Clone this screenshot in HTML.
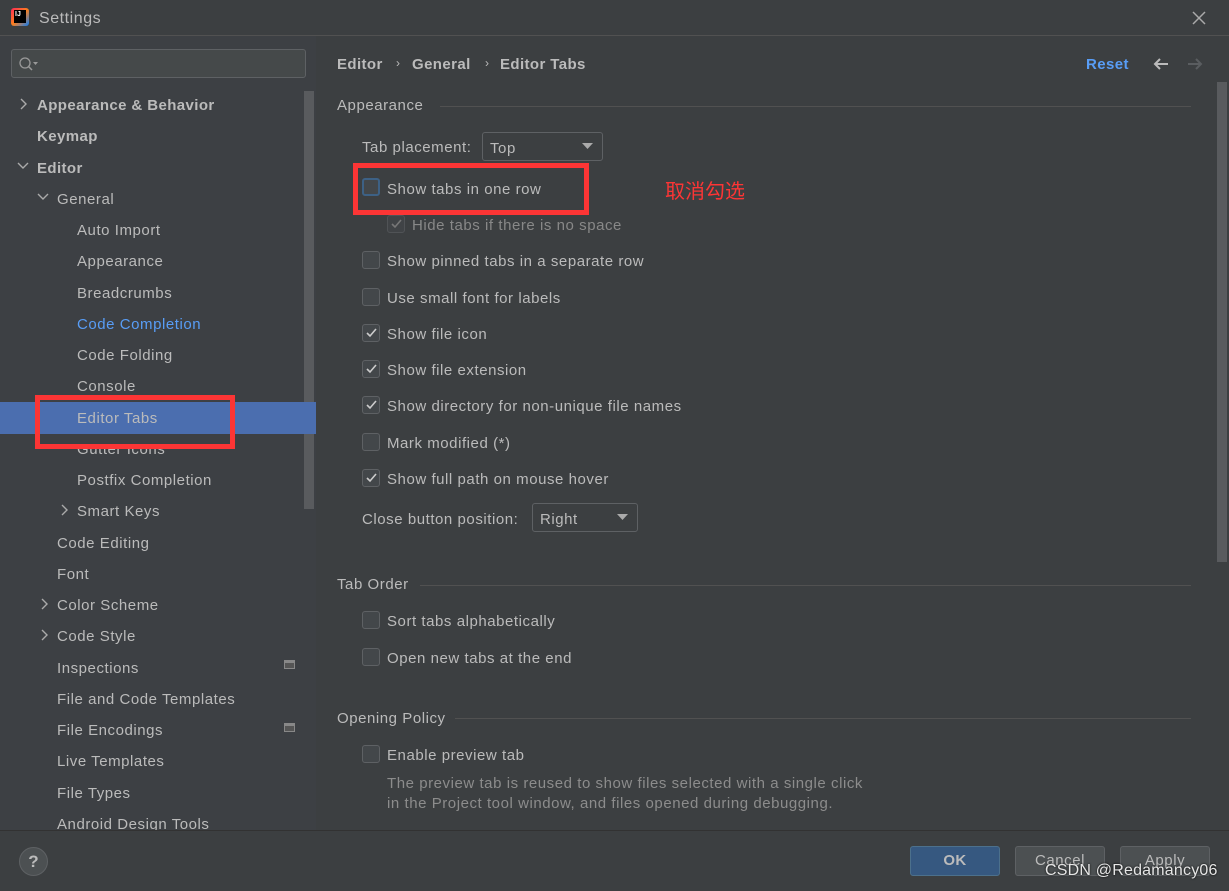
<!DOCTYPE html>
<html><head><meta charset="utf-8"><style>
*{margin:0;padding:0;box-sizing:border-box}
body{width:1229px;height:891px;background:#3c3f41;font-family:"Liberation Sans","Noto Sans CJK SC",sans-serif;font-size:15px;letter-spacing:0.55px;color:#bbbbbb;position:relative;overflow:hidden}
.a{position:absolute;white-space:nowrap}
.side{position:absolute;left:0;top:36px;width:316px;height:795px;background:#3d4044}
.row{position:absolute;height:31px;line-height:33px}
.b{font-weight:bold;letter-spacing:0.4px}
.cb{position:absolute;width:18px;height:18px;border:1px solid #5e6164;border-radius:3px;background:#43474a}
.chk{position:absolute;left:362px}
.lbl{position:absolute;left:387px;line-height:20px;margin-top:1px}
.chev{position:absolute;font-size:13px;color:#aaa}
.btn{position:absolute;top:846px;width:90px;height:30px;border:1px solid #5e6164;border-radius:3px;background:#4c5052;text-align:center;line-height:28px;color:#bbb}
.sep{position:absolute;height:1px;background:#515151}
</style></head><body>
<div class="a" style="left:0;top:0;width:1229px;height:36px;background:#3c3f41;border-bottom:1px solid #515151"></div>
<div class="a" style="left:11px;top:8px;width:18px;height:18px;background:linear-gradient(135deg,#fe2857,#fc801d 50%,#087cfa);border-radius:3px"></div>
<div class="a" style="left:14px;top:10px;width:12px;height:13px;background:#000;color:#fff;font-size:7px;font-weight:bold;line-height:9px;padding-left:1px;letter-spacing:0">IJ</div>
<div class="a" style="left:39px;top:10px;font-size:16px;color:#bbb">Settings</div>
<svg class="a" style="left:1191px;top:10px" width="16" height="16"><path d="M2 2L14 14M14 2L2 14" stroke="#aaa" stroke-width="1.5"/></svg>

<div class="side"></div>
<div class="a" style="left:11px;top:49px;width:295px;height:29px;border:1px solid #5e6164;border-radius:3px;background:#45494a"></div>
<svg class="a" style="left:18px;top:56px" width="22" height="16"><circle cx="7" cy="7" r="5" fill="none" stroke="#999" stroke-width="1.3"/><path d="M10.5 10.5L14 14" stroke="#999" stroke-width="1.5"/><path d="M15 6h5l-2.5 3z" fill="#999"/></svg>
<div class="a" style="left:304px;top:91px;width:10px;height:418px;background:#595b5e"></div>
<div class="a" style="left:0;top:402px;width:316px;height:32px;background:#4b6eaf"></div>

<svg class="a" style="left:19px;top:98px" width="10" height="12"><path d="M2 1l5 5-5 5" stroke="#aaa" fill="none" stroke-width="1.4"/></svg>
<div class="row b" style="left:37px;top:89px">Appearance &amp; Behavior</div>
<div class="row b" style="left:37px;top:120px">Keymap</div>
<svg class="a" style="left:17px;top:161px" width="12" height="10"><path d="M1 2l5 5 5-5" stroke="#aaa" fill="none" stroke-width="1.4"/></svg>
<div class="row b" style="left:37px;top:152px">Editor</div>
<svg class="a" style="left:37px;top:192px" width="12" height="10"><path d="M1 2l5 5 5-5" stroke="#aaa" fill="none" stroke-width="1.4"/></svg>
<div class="row" style="left:57px;top:183px">General</div>
<div class="row" style="left:77px;top:214px">Auto Import</div>
<div class="row" style="left:77px;top:245px">Appearance</div>
<div class="row" style="left:77px;top:277px">Breadcrumbs</div>
<div class="row" style="left:77px;top:308px;color:#589df6">Code Completion</div>
<div class="row" style="left:77px;top:339px">Code Folding</div>
<div class="row" style="left:77px;top:370px">Console</div>
<div class="row" style="left:77px;top:402px">Editor Tabs</div>
<div class="row" style="left:77px;top:433px">Gutter Icons</div>
<div class="row" style="left:77px;top:464px">Postfix Completion</div>
<svg class="a" style="left:60px;top:504px" width="10" height="12"><path d="M2 1l5 5-5 5" stroke="#aaa" fill="none" stroke-width="1.4"/></svg>
<div class="row" style="left:77px;top:495px">Smart Keys</div>
<div class="row" style="left:57px;top:527px">Code Editing</div>
<div class="row" style="left:57px;top:558px">Font</div>
<svg class="a" style="left:40px;top:598px" width="10" height="12"><path d="M2 1l5 5-5 5" stroke="#aaa" fill="none" stroke-width="1.4"/></svg>
<div class="row" style="left:57px;top:589px">Color Scheme</div>
<svg class="a" style="left:40px;top:629px" width="10" height="12"><path d="M2 1l5 5-5 5" stroke="#aaa" fill="none" stroke-width="1.4"/></svg>
<div class="row" style="left:57px;top:620px">Code Style</div>
<div class="row" style="left:57px;top:652px">Inspections</div>
<div class="a" style="left:284px;top:660px;width:11px;height:9px;border:1px solid #888;border-top-width:3px;background:#555"></div>
<div class="row" style="left:57px;top:683px">File and Code Templates</div>
<div class="row" style="left:57px;top:714px">File Encodings</div>
<div class="a" style="left:284px;top:723px;width:11px;height:9px;border:1px solid #888;border-top-width:3px;background:#555"></div>
<div class="row" style="left:57px;top:745px">Live Templates</div>
<div class="row" style="left:57px;top:777px">File Types</div>
<div class="row" style="left:57px;top:808px">Android Design Tools</div>
<div class="a" style="left:35px;top:395px;width:200px;height:54px;border:5px solid #fc3535"></div>

<div class="a b" style="left:337px;top:56px">Editor</div>
<div class="a" style="left:396px;top:56px;font-size:12px">&#x203A;</div>
<div class="a b" style="left:412px;top:56px">General</div>
<div class="a" style="left:485px;top:56px;font-size:12px">&#x203A;</div>
<div class="a b" style="left:500px;top:56px">Editor Tabs</div>
<div class="a b" style="left:1086px;top:56px;color:#589df6">Reset</div>
<svg class="a" style="left:1152px;top:57px" width="18" height="14"><path d="M16 7H3M8 2L3 7l5 5" stroke="#bbb" fill="none" stroke-width="2"/></svg>
<svg class="a" style="left:1186px;top:57px" width="18" height="14"><path d="M2 7h13M10 2l5 5-5 5" stroke="#5a5d60" fill="none" stroke-width="2"/></svg>
<div class="a" style="left:1217px;top:82px;width:10px;height:480px;background:#595b5e"></div>

<div class="a" style="left:337px;top:97px">Appearance</div>
<div class="sep" style="left:440px;top:106px;width:751px"></div>
<div class="a" style="left:362px;top:139px">Tab placement:</div>
<div class="a" style="left:482px;top:132px;width:121px;height:29px;border:1px solid #5e6164;border-radius:3px;background:#3c3f41;padding:7px 0 0 7px">Top</div>
<svg class="a" style="left:582px;top:143px" width="12" height="8"><path d="M0 0h11l-5.5 6z" fill="#aaa"/></svg>

<div class="cb" style="left:362px;top:178px;border:2px solid #3d6185"></div><div class="lbl" style="top:179px">Show tabs in one row</div>
<div class="a" style="left:353px;top:163px;width:236px;height:52px;border:5px solid #fc3535"></div>
<div class="a" style="left:665px;top:175px;font-size:20px;color:#fc3535;letter-spacing:0">取消勾选</div>

<div class="cb" style="left:387px;top:215px;opacity:.6"></div><svg class="a" style="left:389px;top:217px" width="14" height="14"><path d="M3 7l3 3 6-7" stroke="#777" fill="none" stroke-width="1.6"/></svg>
<div class="lbl" style="left:412px;top:215px;color:#888">Hide tabs if there is no space</div>

<div class="cb chk" style="top:251px"></div><div class="lbl" style="top:251px">Show pinned tabs in a separate row</div>
<div class="cb chk" style="top:288px"></div><div class="lbl" style="top:288px">Use small font for labels</div>
<div class="cb chk" style="top:324px"></div><svg class="a" style="left:364px;top:326px" width="14" height="14"><path d="M3 7l3 3 6-7" stroke="#ccc" fill="none" stroke-width="1.6"/></svg><div class="lbl" style="top:324px">Show file icon</div>
<div class="cb chk" style="top:360px"></div><svg class="a" style="left:364px;top:362px" width="14" height="14"><path d="M3 7l3 3 6-7" stroke="#ccc" fill="none" stroke-width="1.6"/></svg><div class="lbl" style="top:360px">Show file extension</div>
<div class="cb chk" style="top:396px"></div><svg class="a" style="left:364px;top:398px" width="14" height="14"><path d="M3 7l3 3 6-7" stroke="#ccc" fill="none" stroke-width="1.6"/></svg><div class="lbl" style="top:396px">Show directory for non-unique file names</div>
<div class="cb chk" style="top:433px"></div><div class="lbl" style="top:433px">Mark modified (*)</div>
<div class="cb chk" style="top:469px"></div><svg class="a" style="left:364px;top:471px" width="14" height="14"><path d="M3 7l3 3 6-7" stroke="#ccc" fill="none" stroke-width="1.6"/></svg><div class="lbl" style="top:469px">Show full path on mouse hover</div>
<div class="a" style="left:362px;top:511px">Close button position:</div>
<div class="a" style="left:532px;top:503px;width:106px;height:29px;border:1px solid #5e6164;border-radius:3px;padding:7px 0 0 7px">Right</div>
<svg class="a" style="left:617px;top:514px" width="12" height="8"><path d="M0 0h11l-5.5 6z" fill="#aaa"/></svg>

<div class="a" style="left:337px;top:576px">Tab Order</div>
<div class="sep" style="left:420px;top:585px;width:771px"></div>
<div class="cb chk" style="top:611px"></div><div class="lbl" style="top:611px">Sort tabs alphabetically</div>
<div class="cb chk" style="top:648px"></div><div class="lbl" style="top:648px">Open new tabs at the end</div>

<div class="a" style="left:337px;top:710px">Opening Policy</div>
<div class="sep" style="left:455px;top:718px;width:736px"></div>
<div class="cb chk" style="top:745px"></div><div class="lbl" style="top:745px">Enable preview tab</div>
<div class="a" style="left:387px;top:774px;color:#8c8c8c;line-height:20px">The preview tab is reused to show files selected with a single click<br>in the Project tool window, and files opened during debugging.</div>

<div class="a" style="left:0;top:830px;width:1229px;height:61px;background:#3c3f41;border-top:1px solid #323232"></div>
<div class="a" style="left:19px;top:847px;width:29px;height:29px;border-radius:50%;background:#4c5052;border:1px solid #5e6164;text-align:center;line-height:27px;font-weight:bold;font-size:17px;color:#bbb;letter-spacing:0">?</div>
<div class="btn b" style="left:910px;background:#365880;border-color:#4c708c">OK</div>
<div class="btn" style="left:1015px">Cancel</div>
<div class="btn" style="left:1120px">Apply</div>
<div class="a" style="left:1045px;top:862px;font-size:16px;color:#e6e6e6;text-shadow:0 0 2px #000;letter-spacing:0.2px">CSDN @Redamancy06</div>
</body></html>
